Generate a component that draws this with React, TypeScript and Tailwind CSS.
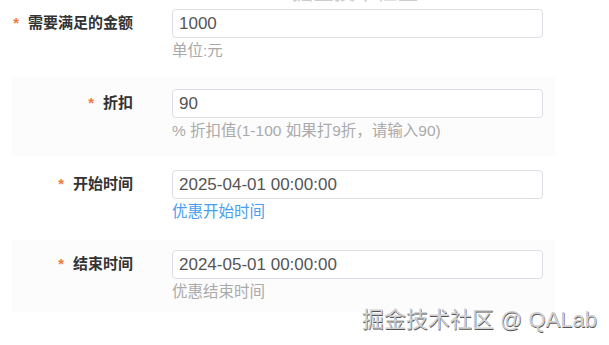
import React from "react";

type Row = {
  label: string;
  value: string;
  help: string;
  helpBlue?: boolean;
  cls: string;
};

const rows: Row[] = [
  { label: "需要满足的金额", value: "1000", help: "单位:元", cls: "h-[77px] pt-[9px] bg-white" },
  {
    label: "折扣",
    value: "90",
    help: "% 折扣值(1-100 如果打9折，请输入90)",
    cls: "h-[79px] pt-[12px] bg-[#fcfcfc]",
  },
  {
    label: "开始时间",
    value: "2025-04-01 00:00:00",
    help: "优惠开始时间",
    helpBlue: true,
    cls: "h-[84px] pt-[14px] bg-white",
  },
  {
    label: "结束时间",
    value: "2024-05-01 00:00:00",
    help: "优惠结束时间",
    cls: "h-[72px] pt-[10px] bg-[#fcfcfc]",
  },
];

const font = {
  fontFamily: '"Liberation Sans", "Noto Sans CJK SC", sans-serif',
};

export default function App() {
  return (
    <div className="relative w-[609px] h-[345px] overflow-hidden bg-white" style={font}>
      <div className="absolute left-[292px] top-[-20px] text-[21px] leading-[24px] text-[#cccccc] whitespace-nowrap">
        掘金技术社区
      </div>
      <div className="flex flex-col ml-[12px] w-[543px]">
        {rows.map((r, i) => (
          <div key={i} className={`flex items-start ${r.cls}`}>
            <div className="w-[121px] shrink-0 h-[29px] flex items-center justify-end whitespace-nowrap text-[15px] font-bold text-[#333333]">
              <span className="text-[#f07a3c] mr-[9px] text-[15px]">*</span>
              <span>{r.label}</span>
            </div>
            <div className="ml-[39px] flex flex-col">
              <div className="w-[371px] h-[29px] flex items-center px-[6px] border border-[#dcdfe6] rounded-[4px] bg-white text-[17px] text-[#555555]">
                {r.value}
              </div>
              <div
                className={`mt-[3px] whitespace-nowrap text-[15.5px] leading-[20px] ${r.helpBlue ? "text-[#4a9ef0]" : "text-[#aaaaaa]"}`}
              >
                {r.help}
              </div>
            </div>
          </div>
        ))}
      </div>
      <div className="absolute left-[362px] top-[306px] text-[22px] leading-[28px] text-[#d0d0d0] whitespace-nowrap [text-shadow:0.5px_0.5px_0.5px_#555555]">
        掘金技术社区 @ QALab
      </div>
    </div>
  );
}
